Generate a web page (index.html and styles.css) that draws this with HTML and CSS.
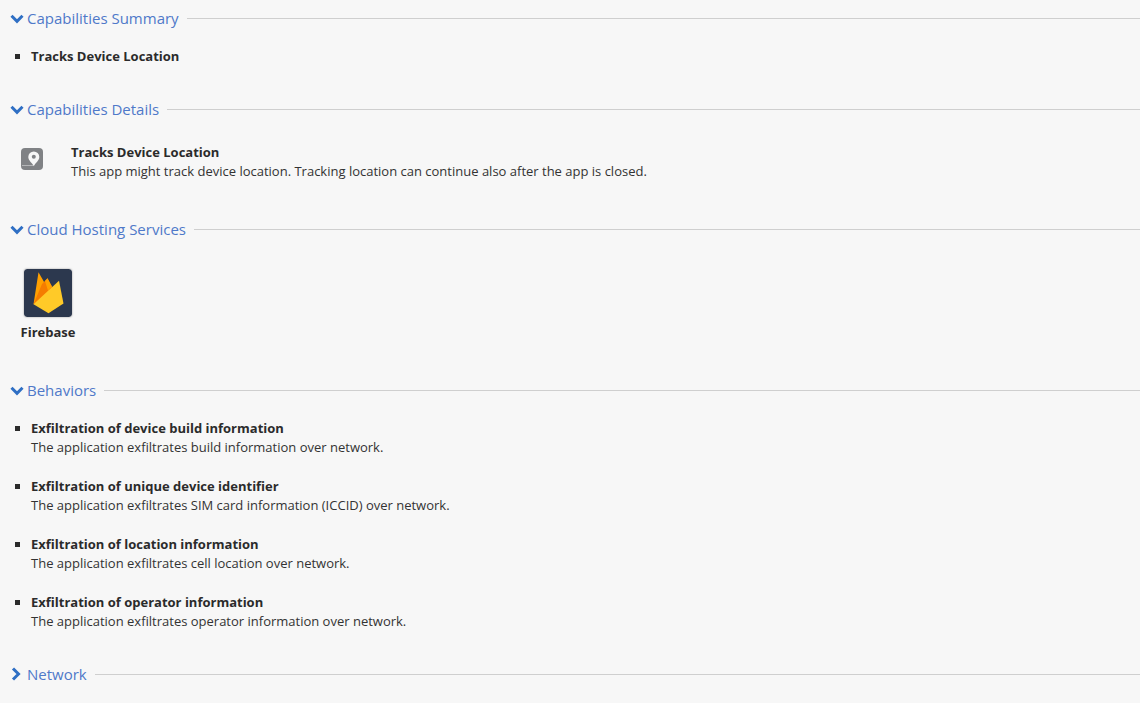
FILE: index.html
```html
<!DOCTYPE html>
<html>
<head>
    <title>App Report</title>
    <link rel="stylesheet" href="styles.css">
</head>
<body>
    <div class="section summary">
        <div class="section-title">
            <svg class="chevron" viewBox="0 0 14 10"><path d="M1.500 1.800 7 7.300 12.500 1.800"/></svg>
            <span>Capabilities Summary</span>
        </div>
        <ul class="items">
            <li><b>Tracks Device Location</b></li>
        </ul>
    </div>

    <div class="section details">
        <div class="section-title">
            <svg class="chevron" viewBox="0 0 14 10"><path d="M1.500 1.800 7 7.300 12.500 1.800"/></svg>
            <span>Capabilities Details</span>
        </div>
        <div class="capability">
            <svg class="cap-icon" viewBox="0 0 22 22">
                <rect width="22" height="22" rx="4" fill="#808285"/>
                <rect x="1" y="17" width="11" height="1" fill="#b4b5b7"/>
                <path d="M12.800 3.500a5.500 5.500 0 0 0-5.500 5.500c0 3.400 3.900 5.900 5.500 9.200 1.600-3.300 5.500-5.800 5.500-9.200a5.500 5.500 0 0 0-5.500-5.500z" fill="#f7f7f7"/>
                <circle cx="12.800" cy="8.800" r="2" fill="#808285"/>
            </svg>
            <div class="cap-text">
                <b>Tracks Device Location</b>
                <div>This app might track device location. Tracking location can continue also after the app is closed.</div>
            </div>
        </div>
    </div>

    <div class="section hosting">
        <div class="section-title">
            <svg class="chevron" viewBox="0 0 14 10"><path d="M1.500 1.800 7 7.300 12.500 1.800"/></svg>
            <span>Cloud Hosting Services</span>
        </div>
        <div class="service">
            <svg class="service-icon" viewBox="0 0 48 48">
                <rect width="48" height="48" rx="3" fill="#2c384e"/>
                <path d="M9.500 35.300 14.500 3.300 21.500 15.500 25 24z" fill="#ffa000"/>
                <path d="M9.500 35.300 18 15 23.500 9.300 28.500 19 19 29z" fill="#f57c00"/>
                <path d="M23.500 9.300 28 17.500 24 21.500 21 12z" fill="#ffa000"/>
                <path d="M9.500 35.300 35 11.700 39.500 34.500 24.500 44.300z" fill="#ffca28"/>
            </svg>
            <b>Firebase</b>
        </div>
    </div>

    <div class="section behaviors">
        <div class="section-title">
            <svg class="chevron" viewBox="0 0 14 10"><path d="M1.500 1.800 7 7.300 12.500 1.800"/></svg>
            <span>Behaviors</span>
        </div>
        <ul class="items">
            <li><b>Exfiltration of device build information</b><div>The application exfiltrates build information over network.</div></li>
            <li><b>Exfiltration of unique device identifier</b><div>The application exfiltrates SIM card information (ICCID) over network.</div></li>
            <li><b>Exfiltration of location information</b><div>The application exfiltrates cell location over network.</div></li>
            <li><b>Exfiltration of operator information</b><div>The application exfiltrates operator information over network.</div></li>
        </ul>
    </div>

    <div class="section network">
        <div class="section-title">
            <svg class="chevron right" viewBox="0 0 10 14"><path d="M2 1.500 7.500 7 2 12.500"/></svg>
            <span>Network</span>
        </div>
    </div>
</body>
</html>
```

FILE: styles.css
```css
body {
    margin: 0;
    height: 703px;
    overflow: hidden;
    background: #f7f7f7;
    font-family: "Open Sans", sans-serif;
    font-size: 13px;
    line-height: 19px;
    color: #333;
}

b {
    font-weight: 700;
    color: #2b2b2b;
}

.section-title {
    display: flex;
    align-items: center;
    height: 20px;
    padding-left: 10px;
    font-size: 15px;
    color: #4f79c9;
}

.section-title::after {
    content: "";
    flex: 1;
    height: 1px;
    margin-left: 8px;
    background: #cfcfcf;
}

.chevron {
    width: 14px;
    height: 10px;
    margin: 2px 3px 0 0;
    fill: none;
    stroke: #2f6fc4;
    stroke-width: 3;
}

.chevron.right {
    width: 10px;
    height: 14px;
    margin: 0 6px 0 1px;
}

.section {
    box-sizing: border-box;
    padding-top: 8px;
}

.summary {
    height: 91px;
}

.details {
    height: 120px;
}

.hosting {
    height: 161px;
}

.behaviors {
    height: 284px;
}

.items {
    list-style: none;
    margin: 19px 0 0;
    padding: 0 0 0 31px;
}

.items li {
    position: relative;
    margin-bottom: 20px;
}

.items li::before {
    content: "";
    position: absolute;
    left: -16px;
    top: 7px;
    width: 5px;
    height: 5px;
    background: #2b2b2b;
}

.capability {
    display: flex;
    align-items: flex-start;
    margin-top: 24px;
    padding-left: 21px;
}

.cap-icon {
    width: 22px;
    height: 22px;
    margin-top: 5px;
}

.cap-text {
    margin-left: 28px;
}

.service {
    display: flex;
    flex-direction: column;
    align-items: center;
    width: 54px;
    margin: 30px 0 0 21px;
}

.service-icon {
    width: 48px;
    height: 48px;
    margin-bottom: 6px;
    box-shadow: 0 0 2px rgba(0, 0, 0, 0.4);
    border-radius: 3px;
}
```
